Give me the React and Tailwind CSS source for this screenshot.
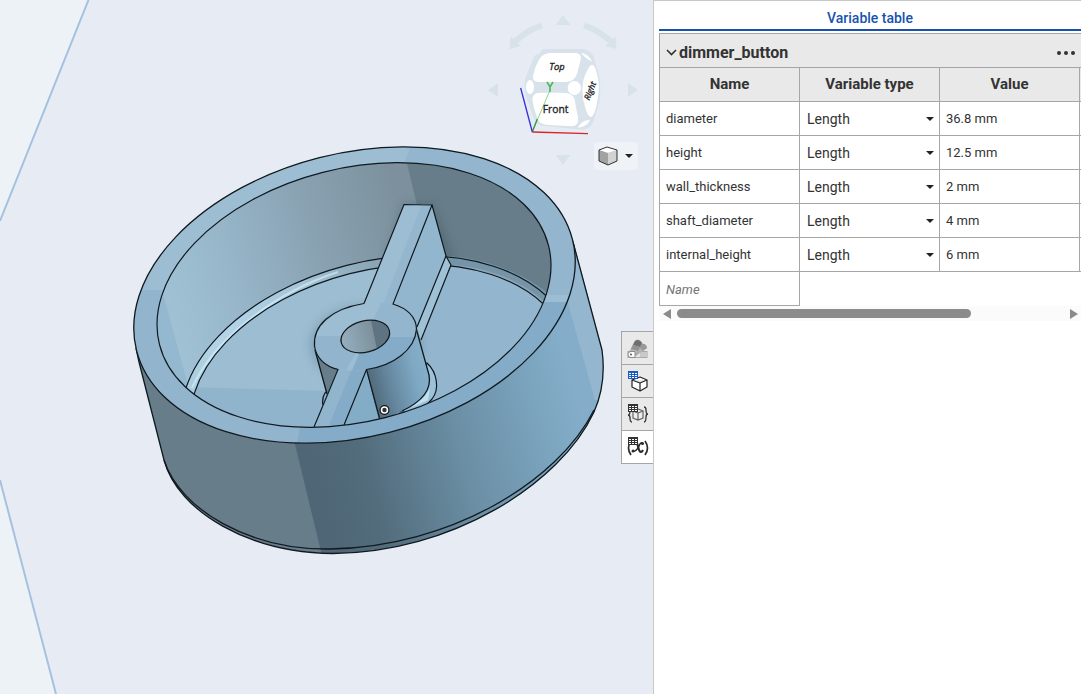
import { useState } from 'react';

const VARIABLES = [
  { name: 'diameter', type: 'Length', value: '36.8 mm' },
  { name: 'height', type: 'Length', value: '12.5 mm' },
  { name: 'wall_thickness', type: 'Length', value: '2 mm' },
  { name: 'shaft_diameter', type: 'Length', value: '4 mm' },
  { name: 'internal_height', type: 'Length', value: '6 mm' },
];

const TYPES = ['Length', 'Angle', 'Number', 'Any'];

// All circles of the part share the same tilt
const Ring = ({ cx, cy, rx, ry, ...rest }) => (
  <ellipse cx={cx} cy={cy} rx={rx} ry={ry} transform={`rotate(-14.3 ${cx} ${cy})`} {...rest} />
);

const Model = () => (
  <svg viewBox="0 0 653 694" preserveAspectRatio="xMinYMin slice" className="block h-full w-full" role="img" aria-label="dimmer button part">
    <defs>
      <linearGradient id="outerWall" gradientUnits="userSpaceOnUse" x1="320" y1="500" x2="585" y2="430">
        <stop offset="0" stopColor="#4e6675" />
        <stop offset="0.2" stopColor="#536d7d" />
        <stop offset="0.55" stopColor="#6b8fa5" />
        <stop offset="0.85" stopColor="#7ba4be" />
        <stop offset="1" stopColor="#83adc9" />
      </linearGradient>
      <linearGradient id="innerWall" gradientUnits="userSpaceOnUse" x1="165" y1="330" x2="415" y2="262">
        <stop offset="0" stopColor="#a1c2d5" />
        <stop offset="0.3" stopColor="#97b6ca" />
        <stop offset="0.65" stopColor="#89a2b2" />
        <stop offset="1" stopColor="#7c919d" />
      </linearGradient>
      <linearGradient id="fillet" gradientUnits="userSpaceOnUse" x1="185" y1="390" x2="400" y2="260">
        <stop offset="0" stopColor="#a5c8dc" />
        <stop offset="0.4" stopColor="#b4d5e7" />
        <stop offset="0.75" stopColor="#a5c4d7" />
        <stop offset="1" stopColor="#8aa5b6" />
      </linearGradient>
      <linearGradient id="boss" gradientUnits="userSpaceOnUse" x1="370" y1="392" x2="432" y2="376">
        <stop offset="0" stopColor="#4e6878" />
        <stop offset="0.35" stopColor="#6688a0" />
        <stop offset="0.75" stopColor="#7ea8c3" />
        <stop offset="1" stopColor="#86afca" />
      </linearGradient>
      <linearGradient id="hole" gradientUnits="userSpaceOnUse" x1="342" y1="340" x2="380" y2="330">
        <stop offset="0" stopColor="#94aebe" />
        <stop offset="1" stopColor="#788a95" />
      </linearGradient>
      <filter id="soft" x="-30%" y="-30%" width="160%" height="160%">
        <feGaussianBlur stdDeviation="5" />
      </filter>
      <clipPath id="rimClip">
        <Ring cx={354.5} cy={295} rx={224.9} ry={141.8} />
      </clipPath>
      <clipPath id="bowlClip">
        <Ring cx={354} cy={295} rx={200.7} ry={126.6} />
      </clipPath>
      <clipPath id="floorClip">
        <Ring cx={380} cy={392} rx={193.6} ry={122.1} />
      </clipPath>
      <clipPath id="bossClip">
        <Ring cx={365.3} cy={336.5} rx={52} ry={32.8} />
      </clipPath>
      <clipPath id="holeClip">
        <Ring cx={365.3} cy={336.5} rx={24.8} ry={15.6} />
      </clipPath>
      <clipPath id="bodyClip">
        <path d="M135 343 L139 362 L164 460 C178 512 250 553 333 553 C450 553 560 485 594 412 C602 394 605 372 602 350 L573 240 Z" />
      </clipPath>
    </defs>

    <rect width="653" height="694" fill="#e7ecf4" />
    <path d="M0 0 H88 L0 222 Z M0 480 L56 694 H0 Z" fill="#ecf2f6" />
    <path d="M88.500 0 L0 221 M0 480 L56 694" stroke="#a6c1df" strokeWidth="2" fill="none" />

    {/* Outer wall */}
    <g clipPath="url(#bodyClip)">
      <rect x="120" y="200" width="500" height="370" fill="#677d8a" />
      <path d="M294 440 L323 560 H620 V200 Z" fill="url(#outerWall)" />
      <path d="M567 300 L595 400 L620 400 V200 H560 Z" fill="#94b7cf" />
    </g>
    <g fill="none" stroke="#10191f" strokeWidth="1.3">
      <path d="M136 348 L139 362 L164 460 C178 512 250 553 333 553.500 C450 553 560 485 594 412 C602 394 605 372 602 350 L573 242" />
      <path d="M164 460 C180 510 250 550 330 549 C450 547 558 482 594 410" />
    </g>

    {/* Rim */}
    <g clipPath="url(#rimClip)">
      <rect x="120" y="140" width="470" height="310" fill="#9dbdd2" />
      <path d="M120 290 H354 L297 460 H120 Z" fill="#92b5cd" />
      <path d="M413 140 L354 295 H600 V140 Z" fill="#93b6ce" />
      <path d="M300 427 L354 302 H600 V460 H294 Z" fill="#84acc8" />
    </g>
    <Ring cx={354.5} cy={295} rx={224.9} ry={141.8} fill="none" stroke="#10191f" strokeWidth="1.3" />

    {/* Inside of the cup */}
    <g clipPath="url(#bowlClip)">
      <rect x="150" y="155" width="410" height="280" fill="url(#innerWall)" />
      <path d="M150 270 L160 282 L192 400 L150 400 Z" fill="#94b8d0" />
      <path d="M405 155 L430 260 L560 330 V155 Z" fill="#677d8a" />
      <path d="M385 262 L404 204 L433 204 L456 262 Z" fill="#4b5e6a" opacity="0.5" filter="url(#soft)" />
      <Ring cx={378} cy={388} rx={200.7} ry={126.6} fill="url(#fillet)" />
      <path d="M446 256 C485 258 520 272 548 293 L545 302 C520 280 488 267 451 265 Z" fill="#7594a8" />
      <g clipPath="url(#floorClip)">
        <rect x="180" y="250" width="390" height="190" fill="#9dbdd2" />
        <path d="M180 387 L330 391 V440 H180 Z" fill="#90b4cc" />
        <path d="M410 250 H570 V440 H400 Z" fill="#93b6ce" />
        <ellipse cx="366" cy="345" rx="56" ry="40" fill="#55758a" opacity="0.35" filter="url(#soft)" />
      </g>
      <path d="M192 388 C212 343 270 294 338 272" fill="none" stroke="#d9f1fc" strokeWidth="2" opacity="0.6" />
      <g fill="none" stroke="#10191f" strokeWidth="1.2">
        <Ring cx={378} cy={388} rx={200.7} ry={126.6} />
        <Ring cx={380} cy={392} rx={193.6} ry={122.1} />
      </g>

      {/* Boss side and the fillet round its foot */}
      <path d="M427 363 C437 372 440 389 432 399 L420 412 L400 412 L420 385 Z" fill="#9bc2d9" stroke="#10191f" strokeWidth="1.2" />
      <path d="M410 408 C418 402 424 400 430 388 L428 400 Z" fill="#d4effb" opacity="0.7" />
      <path d="M314 343 L316 353 L327 396 L323 405 L337 372 L345 340 Z" fill="#677d8a" />
      <path d="M323 405 C322 399 323 394 327 392 Z" fill="#90b4cc" />
      <path d="M315 350 L327 394 M327 391 C323 394 322 400 323 407" fill="none" stroke="#10191f" strokeWidth="1.3" />
      <path d="M416 328 L429 375 C432 390 421 402 402 411 L378 422 L366 368 Z" fill="url(#boss)" />
      <path d="M416 328 L429 375 C432 390 421 402 402 411" fill="none" stroke="#10191f" strokeWidth="1.3" />

      {/* Ribs */}
      <path d="M446 256 L451 265 L421 340 L417 327 Z" fill="#9fc1d5" />
      <path d="M432 205 L446 256 L417 327 L393 304 Z" fill="#93b6cf" />
      <path d="M404 204 L432 205 L393 304 L378 320 L350 320 L364 304 Z" fill="#9dbdd2" />
      <path d="M422 204 L432 205 L393 304 L380 312 Z" fill="#94b7ce" />
      <path d="M366 370 L379 420 L344 427 Z" fill="#83acc7" />
      <path d="M338 369 L366 369 L343 430 L312 430 Z" fill="#84acc8" />
      <path d="M338 369 L352 369 L327 430 L312 430 Z" fill="#91b5cd" />
    </g>
    <g clipPath="url(#bossClip)">
      <rect x="310" y="300" width="110" height="75" fill="#9dbdd2" />
      <path d="M310 336 H366 L340 380 H310 Z" fill="#92b5cd" />
      <path d="M382 300 L366 337 H420 V300 Z" fill="#93b6ce" />
      <path d="M366 337 H420 V380 H348 Z" fill="#84acc8" />
    </g>
    <g clipPath="url(#holeClip)">
      <rect x="338" y="315" width="55" height="45" fill="url(#hole)" />
      <path d="M370 315 L379 360 H395 V315 Z" fill="#5e7482" />
    </g>
    <g fill="none" stroke="#10191f" strokeWidth="1.2">
      <Ring cx={354} cy={295} rx={200.7} ry={126.6} />
      <Ring cx={365.3} cy={336.5} rx={24.8} ry={15.6} />
      <path d="M364 303.500 C330 309 313 326 314.500 346 C316 357 324 366 338 369.500 L314 427" />
      <path d="M364 303.500 L404 204.500 L432 205 L393 304 C409 309 416 318 416.500 329 C415 350 393 366 366.500 369.500 L344 425" />
      <path d="M432 205 L446 256 L417 327 M446 256 L451 265 L421 340 M366.500 369.500 L379.500 418" />
    </g>
    {/* Origin marker */}
    <circle cx="384.500" cy="410" r="5" fill="#111" />
    <circle cx="384.500" cy="410" r="3" fill="#333" stroke="#fff" strokeWidth="1.6" />
  </svg>
);

const ViewCube = () => (
  <svg viewBox="0 0 522 525" className="block h-[175px] w-[174px]" role="img" aria-label="View cube">
    <g fill="#d7e2eb">
      <path d="M249 30 L271 60 H227 Z M249 480 L227 450 H271 Z M24 255 L54 234 V277 Z M474 255 L444 234 V277 Z" />
      <path d="M88 132 L92 94 L101 102 Q138 66 183 54 L189 70 Q146 84 113 115 L122 124 Z" />
      <path d="M410 132 L406 94 L397 102 Q360 66 315 54 L309 70 Q352 84 385 115 L376 124 Z" />
      <path d="M192 132 H308 Q330 134 340 152 L358 215 Q364 250 358 290 L342 345 Q334 372 308 374 L185 362 Q166 358 156 325 L136 268 Q132 240 136 220 L162 155 Q168 146 178 148 Q182 134 192 132 Z" />
    </g>
    <g fill="#fff">
      <path d="M208 144 H288 Q306 146 302 164 L292 204 Q284 230 258 231 H176 Q156 230 159 212 Q165 184 178 163 Q188 146 208 144 Z" />
      <path d="M178 263 H250 Q280 264 284 284 Q288 310 294 336 Q298 362 276 364 L205 360 Q178 360 172 340 Q160 310 157 282 Q158 264 178 263 Z" />
      <path d="M335 179 Q342 179 346 190 Q354 215 357 240 Q357 268 350 300 Q342 332 334 336 Q324 336 318 316 Q307 285 307 254 Q308 220 320 200 Q328 182 335 179 Z" />
      <ellipse cx="150" cy="246" rx="12" ry="21" />
      <ellipse cx="283" cy="249" rx="20" ry="21" />
      <path d="M303 143 Q325 146 337 170 Q318 162 303 143 Z M293 368 Q305 346 330 344 Q322 366 293 368 Z" />
    </g>
    <g stroke="#8fd59a" strokeWidth="3" fill="none">
      <path d="M157 380 L209 258" />
      <path d="M201 231 L210 246 L219 231 M210 244 V260" stroke="#4fb85c" strokeWidth="5" />
    </g>
    <path d="M157 380 L172 342" stroke="#2f9c3b" strokeWidth="4" />
    <path d="M122 249 L157 381" stroke="#3434d8" strokeWidth="4" />
    <path d="M157 381 L324 386" stroke="#d6262c" strokeWidth="4" />
    <g fill="#222" stroke="#222" fontFamily="'Open Sans', sans-serif" textAnchor="middle">
      <text x="231" y="196" fontSize="28" fontStyle="italic">Top</text>
      <text x="227" y="325" fontSize="31">Front</text>
      <text x="331" y="266" fontSize="25" fontStyle="italic" transform="rotate(-68 331 258)">Right</text>
    </g>
  </svg>
);

const Caret = ({ className = '' }) => (
  <svg viewBox="0 0 8 4" className={`h-1 w-2 ${className}`} aria-hidden="true">
    <path d="M0 0 H8 L4 4 Z" fill="#222" />
  </svg>
);

const TableGlyph = ({ color }) => (
  <g>
    <rect x="0" y="0" width="10" height="8" fill={color} />
    <path d="M1 2 h2 v1 h-2 z M4 2 h2 v1 h-2 z M7 2 h2 v1 h-2 z M1 4 h2 v1 h-2 z M4 4 h2 v1 h-2 z M7 4 h2 v1 h-2 z M1 6 h2 v1 h-2 z M4 6 h2 v1 h-2 z M7 6 h2 v1 h-2 z" fill="#fff" />
  </g>
);

const AppearanceIcon = () => (
  <svg viewBox="0 0 22 22" className="size-[22px]" aria-hidden="true">
    <rect x="1" y="14.500" width="19" height="6" fill="#e6e6e6" stroke="#a8a8a8" />
    <rect x="13" y="15" width="7" height="5" fill="#c9c9c9" />
    <path d="M6 18 L14 7 Q19 6 20 11 L9 19 Z" fill="#b5b5b5" />
    <path d="M14 7 Q19 6 20 11 L16 14 L12 10 Z" fill="#9a9a9a" />
    <path d="M3 14 L8 4 Q12 1 15 6 L10 17 Z" fill="#b9b9b9" stroke="#999" strokeWidth="0.5" />
    <path d="M8 4 Q12 1 15 6 L13 10 L6 8 Z" fill="#6f6f6f" />
    <path d="M6 8 L13 10 L11 14 L4 12 Z" fill="#929292" />
    <path d="M8 14.500 H4 Q1 14.500 1 17.500 Q1 20.500 4 20.500 H8 Z" fill="#fff" stroke="#8a8a8a" />
    <circle cx="4" cy="17.500" r="1" fill="#555" />
  </svg>
);

const ConfigIcon = () => (
  <svg viewBox="0 0 22 22" className="size-[22px]" aria-hidden="true">
    <path d="M13 7 L20 10 V17 L13 21 L5 17 V10 Z M5 10 L13 13 L20 10 M13 13 V21" fill="#fff" stroke="#222" strokeWidth="1.2" strokeLinejoin="round" />
    <g transform="translate(1 1)">
      <TableGlyph color="#1a5cc4" />
    </g>
  </svg>
);

const CustomTableIcon = () => (
  <svg viewBox="0 0 22 22" className="size-[22px]" aria-hidden="true">
    <path d="M11 6 L16 8 V15 L11 17 L6 15 V8 Z M6 8 L11 10 L16 8 M11 10 V17" fill="#eee" stroke="#666" strokeWidth="1.2" />
    <path d="M5 5 Q3 5 3 8 Q3 12 1 12 Q3 12 3 15 Q3 19 5 19 M17 4 Q19 4 19 7 Q19 11 21 11 Q19 11 19 14 Q19 19 17 19" fill="none" stroke="#333" strokeWidth="1.3" />
    <g transform="translate(1 1)">
      <TableGlyph color="#333" />
    </g>
  </svg>
);

const VariableIcon = () => (
  <svg viewBox="0 0 22 22" className="size-[22px]" aria-hidden="true">
    <path d="M4 5 Q-1 12 4 19 M18 5 Q23 12 18 19" fill="none" stroke="#2b2b2b" strokeWidth="1.7" />
    <path d="M7 7 Q10 6 11 10 Q12 16 14 16 Q15 16 16 14" fill="none" stroke="#2b2b2b" strokeWidth="2.2" />
    <path d="M16 8 Q14 5 12 10 Q9 16 6 15" fill="none" stroke="#2b2b2b" strokeWidth="1.5" />
    <circle cx="15.500" cy="7.500" r="1.500" fill="#2b2b2b" />
    <circle cx="6" cy="15" r="1.500" fill="#2b2b2b" />
    <g transform="translate(1 1)">
      <TableGlyph color="#333" />
    </g>
  </svg>
);

const SIDE_TABS = [
  { label: 'Appearances', Icon: AppearanceIcon },
  { label: 'Configurations', Icon: ConfigIcon },
  { label: 'Custom tables', Icon: CustomTableIcon },
  { label: 'Variable table', Icon: VariableIcon },
];

const VariableRow = ({ variable }) => {
  const [type, setType] = useState(variable.type);

  return (
    <tr className="h-[34px]">
      <td className="border border-[#a6a6a6] px-1.5 text-[13px]">{variable.name}</td>
      <td className="border border-[#a6a6a6] p-0">
        <div className="relative flex items-center">
          <select
            aria-label={`${variable.name} type`}
            value={type}
            onChange={(e) => setType(e.target.value)}
            className="h-8 w-full appearance-none bg-transparent pt-0.5 pl-[7px] text-[14px]"
          >
            {TYPES.map((t) => (
              <option key={t}>{t}</option>
            ))}
          </select>
          <Caret className="pointer-events-none absolute right-[5px]" />
        </div>
      </td>
      <td className="border border-[#a6a6a6] px-1.5 text-[13px]">{variable.value}</td>
      <td className="border border-[#a6a6a6]"></td>
    </tr>
  );
};

const VariablePanel = () => {
  const [open, setOpen] = useState(true);

  return (
    <aside className="min-w-0 overflow-hidden border-t border-[#c8c8c8] bg-white pl-[5px]">
      <h1 className="flex h-[30px] items-center justify-center border-b-2 border-[#1752b0] pt-1.5 text-[14px] font-medium text-[#1752b0]">
        Variable table
      </h1>
      <div className="mt-0.5 flex h-[34px] items-center justify-between border-t border-l border-[#a6a6a6] bg-[#e9e9e9] pt-1 pr-[5px] pl-1.5">
        <button type="button" onClick={() => setOpen(!open)} className="flex items-center gap-0.5 text-base font-bold">
          <svg viewBox="0 0 11 7" className="h-[7px] w-[11px]" aria-hidden="true">
            <path d="M1 1 L5.500 5.500 L10 1" fill="none" stroke="#333" strokeWidth="1.6" />
          </svg>
          dimmer_button
        </button>
        <button type="button" aria-label="More options">
          <svg viewBox="0 0 19 4" className="h-1 w-[19px]" aria-hidden="true">
            <g fill="#333">
              <circle cx="2" cy="2" r="2" />
              <circle cx="9" cy="2" r="2" />
              <circle cx="16" cy="2" r="2" />
            </g>
          </svg>
        </button>
      </div>
      {open && (
        <div className="overflow-hidden">
          <table className="w-[561px] table-fixed border-collapse">
            <thead>
              <tr className="h-[34px] bg-[#e9e9e9] text-[15px]">
                <th className="border border-[#a6a6a6]">Name</th>
                <th className="border border-[#a6a6a6]">Variable type</th>
                <th className="border border-[#a6a6a6]">Value</th>
                <th className="border border-[#a6a6a6]"></th>
              </tr>
            </thead>
            <tbody>
              {VARIABLES.map((v) => (
                <VariableRow key={v.name} variable={v} />
              ))}
              <tr className="h-[34px]">
                <td className="border border-[#a6a6a6] p-0">
                  <input
                    type="text"
                    aria-label="Name"
                    placeholder="Name"
                    className="block h-8 w-full px-1.5 pt-0.5 text-[13px] placeholder:text-[#757575] placeholder:italic"
                  />
                </td>
              </tr>
            </tbody>
          </table>
        </div>
      )}
      <div className="flex h-[15px] items-center gap-1.5 bg-[#fbfbfb] pr-[3px] pl-1">
        <svg viewBox="0 0 8 10" className="h-2.5 w-2" aria-hidden="true">
          <path d="M8 0 V10 L0 5 Z" fill="#8b8b8b" />
        </svg>
        <div className="flex-1">
          <div className="h-[9px] w-[76%] rounded-full bg-[#8b8b8b]"></div>
        </div>
        <svg viewBox="0 0 8 10" className="h-2.5 w-2" aria-hidden="true">
          <path d="M0 0 V10 L8 5 Z" fill="#8b8b8b" />
        </svg>
      </div>
    </aside>
  );
};

export default function App() {
  const [active, setActive] = useState('Variable table');

  return (
    <div className="grid h-screen grid-cols-[654fr_427fr] overflow-hidden bg-white font-['Roboto','Liberation_Sans',sans-serif] text-[#333]">
      <main className="relative min-w-0 overflow-hidden border-r border-[#c8c8c8]">
        <Model />
        <div className="absolute top-[5px] -right-px">
          <ViewCube />
        </div>
        <button
          type="button"
          aria-label="View options"
          className="absolute top-[142px] right-[15px] flex h-7 w-11 items-center justify-between rounded-sm bg-[#eff2f7] pr-[5px] pl-1"
        >
          <svg viewBox="0 0 20 20" className="size-5" aria-hidden="true">
            <path d="M1 4 L9 1 L19 4 V15 L10 19 L1 15 Z" fill="#999" />
            <path d="M1 4 L10 7 V19 L1 15 Z" fill="#a2a2a2" />
            <path d="M10 7 L19 4 V15 L10 19 Z" fill="#d2d2d2" />
            <path d="M1 4 L9 1 L19 4 L10 7 Z" fill="#fff" />
            <path d="M1 4 L9 1 L19 4 V15 L10 19 L1 15 Z" fill="none" stroke="#333" strokeLinejoin="round" />
          </svg>
          <Caret />
        </button>
        <nav className="absolute top-[331px] right-0 flex w-8 flex-col border-t border-l border-[#a6a6a6]">
          {SIDE_TABS.map(({ label, Icon }) => (
            <button
              key={label}
              type="button"
              aria-label={label}
              onClick={() => setActive(label)}
              className={`flex h-[33px] items-center justify-center border-b border-[#a6a6a6] ${
                active === label ? 'bg-white' : 'bg-[#e9e9e9]'
              }`}
            >
              <Icon />
            </button>
          ))}
        </nav>
      </main>
      <VariablePanel />
    </div>
  );
}
